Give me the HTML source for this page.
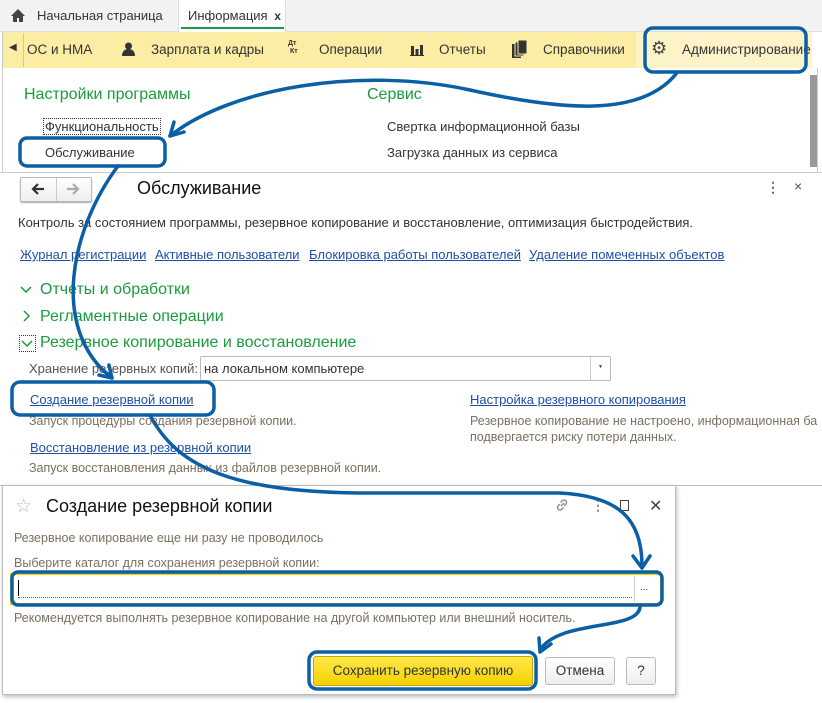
<!DOCTYPE html>
<html><head><meta charset="utf-8"><style>
*{margin:0;padding:0;box-sizing:border-box}
body{width:822px;height:703px;overflow:hidden;background:#fff;font-family:"Liberation Sans",Arial,sans-serif;font-size:13px;color:#333;position:relative}
.a{position:absolute;white-space:nowrap}
.g{color:#1a9c3e;font-size:16px}
.l{color:#1f4fa8;text-decoration:underline}
.m{color:#7b6f5f;font-size:12.5px}
</style></head><body>
<div class="a" style="left:0;top:0;width:822px;height:32px;background:#f2f2f2;border-bottom:1px solid #ddd"></div>
<svg class="a" style="left:11px;top:9px" width="14" height="13" viewBox="0 0 14 13"><path d="M7 0L0 7h2v6h4V9h2v4h4V7h2z" fill="#444"/></svg>
<div class="a" style="left:37px;top:8px;font-size:13px;color:#333">Начальная страница</div>
<div class="a" style="left:178px;top:0;width:108px;height:32px;background:#fff;border-left:1px solid #ddd;border-right:1px solid #ddd"></div>
<div class="a" style="left:188px;top:8px;font-size:13px;color:#333">Информация <b style="font-size:12px;margin-left:3px">x</b></div>
<div class="a" style="left:181px;top:27px;width:103px;height:2px;background:#1a9c3e"></div>
<div class="a" style="left:2px;top:32px;width:810px;height:36px;background:#fbeda3;border-left:1px solid #ccc"></div>
<div class="a" style="left:636px;top:32px;width:176px;height:36px;background:#fdf3c8"></div>
<div class="a" style="left:9px;top:42px;font-size:10px;color:#333">◀</div>
<div class="a" style="left:23px;top:33px;width:1px;height:34px;background:#d8c98a"></div>
<div class="a" style="left:27px;top:42px;font-size:13.5px">ОС и НМА</div>
<svg class="a" style="left:122px;top:42px" width="13" height="14" viewBox="0 0 13 14"><circle cx="6.5" cy="4" r="3.5" fill="#333"/><path d="M0 14c0-5 3-7 6.5-7s6.5 2 6.5 7z" fill="#333"/></svg>
<div class="a" style="left:151px;top:42px;font-size:13.5px">Зарплата и кадры</div>
<div class="a" style="left:288px;top:40px;font-size:7px;line-height:8px;font-weight:bold;color:#333">Дт<br>&nbsp;Кт</div>
<div class="a" style="left:319px;top:42px;font-size:13.5px">Операции</div>
<svg class="a" style="left:410px;top:43px" width="14" height="13"><rect x="1" y="3" width="3" height="9" fill="#333"/><rect x="5.5" y="6" width="3" height="6" fill="#333"/><rect x="10" y="2" width="3" height="10" fill="#333"/><rect x="0" y="12" width="14" height="1" fill="#333"/></svg>
<div class="a" style="left:439px;top:42px;font-size:13.5px">Отчеты</div>
<svg class="a" style="left:512px;top:40px" width="15" height="18"><rect x="0" y="4" width="9" height="14" fill="#333"/><rect x="3" y="2" width="9" height="14" fill="#333" stroke="#fbeda3"/><rect x="6" y="0" width="9" height="14" fill="#333" stroke="#fbeda3"/></svg>
<div class="a" style="left:543px;top:42px;font-size:13.5px">Справочники</div>
<div class="a" style="left:651px;top:38px;font-size:18px;color:#444">⚙</div>
<div class="a" style="left:682px;top:42px;font-size:13.5px">Администрирование</div>
<div class="a" style="left:2px;top:68px;width:816px;height:104px;border-left:1px solid #ccc;border-right:1px solid #ccc"></div>
<div class="a" style="left:810px;top:75px;width:7px;height:92px;background:#999"></div>
<div class="a g" style="left:24px;top:86px">Настройки программы</div>
<div class="a g" style="left:367px;top:86px">Сервис</div>
<div class="a" style="left:43px;top:118px;border:1px dotted #333;padding:0 1px">Функциональность</div>
<div class="a" style="left:45px;top:145px">Обслуживание</div>
<div class="a" style="left:387px;top:119px">Свертка информационной базы</div>
<div class="a" style="left:387px;top:145px">Загрузка данных из сервиса</div>
<div class="a" style="left:0;top:172px;width:822px;height:314px;background:#fff;border-top:1px solid #ccc;border-bottom:1px solid #bbb"></div>
<div class="a" style="left:20px;top:177px;width:72px;height:25px;border:1px solid #bbb;border-radius:2px;background:linear-gradient(#fff,#eee);box-shadow:0 1px 1px #aaa"></div>
<div class="a" style="left:56px;top:178px;width:1px;height:23px;background:#ccc"></div>
<svg class="a" style="left:31px;top:183px" width="14" height="12"><path d="M13 6H3M7 1L2 6l5 5" stroke="#333" stroke-width="2.2" fill="none"/></svg>
<svg class="a" style="left:66px;top:183px" width="14" height="12"><path d="M1 6h10M7 1l5 5-5 5" stroke="#aaa" stroke-width="2.2" fill="none"/></svg>
<div class="a" style="left:137px;top:178px;font-size:18px;color:#111">Обслуживание</div>
<div class="a" style="left:766px;top:179px;font-size:14px;color:#666;font-weight:bold">⋮</div>
<div class="a" style="left:794px;top:178px;font-size:14px;color:#555">×</div>
<div class="a" style="left:18px;top:215px">Контроль за состоянием программы, резервное копирование и восстановление, оптимизация быстродействия.</div>
<div class="a l" style="left:20px;top:247px">Журнал регистрации</div>
<div class="a l" style="left:155px;top:247px">Активные пользователи</div>
<div class="a l" style="left:309px;top:247px">Блокировка работы пользователей</div>
<div class="a l" style="left:529px;top:247px">Удаление помеченных объектов</div>
<svg class="a" style="left:20px;top:285px" width="12" height="10"><path d="M1 2l5 5 5-5" stroke="#1a9c3e" stroke-width="1.5" fill="none"/></svg>
<div class="a g" style="left:40px;top:281px">Отчеты и обработки</div>
<svg class="a" style="left:22px;top:310px" width="10" height="12"><path d="M2 1l5 5-5 5" stroke="#1a9c3e" stroke-width="1.5" fill="none"/></svg>
<div class="a g" style="left:40px;top:308px">Регламентные операции</div>
<div class="a" style="left:19px;top:335px;width:17px;height:17px;border:1px dotted #333"></div>
<svg class="a" style="left:21px;top:339px" width="12" height="10"><path d="M1 2l5 5 5-5" stroke="#1a9c3e" stroke-width="1.5" fill="none"/></svg>
<div class="a g" style="left:40px;top:334px">Резервное копирование и восстановление</div>
<div class="a" style="left:29px;top:361px;color:#555">Хранение резервных копий:</div>
<div class="a" style="left:200px;top:356px;width:411px;height:25px;border:1px solid #bbb;border-radius:2px"></div>
<div class="a" style="left:590px;top:357px;width:1px;height:23px;background:#ccc"></div>
<div class="a" style="left:598px;top:364px;font-size:5px;color:#444">▼</div>
<div class="a" style="left:204px;top:361px">на локальном компьютере</div>
<div class="a l" style="left:30px;top:392px">Создание резервной копии</div>
<div class="a m" style="left:29px;top:414px">Запуск процедуры создания резервной копии.</div>
<div class="a l" style="left:30px;top:440px">Восстановление из резервной копии</div>
<div class="a m" style="left:29px;top:461px">Запуск восстановления данных из файлов резервной копии.</div>
<div class="a l" style="left:470px;top:392px">Настройка резервного копирования</div>
<div class="a m" style="left:470px;top:414px">Резервное копирование не настроено, информационная ба</div>
<div class="a m" style="left:470px;top:430px">подвергается риску потери данных.</div>
<div class="a" style="left:2px;top:485px;width:674px;height:210px;background:#fff;border:1px solid #bbb;box-shadow:1px 2px 4px rgba(0,0,0,.25)"></div>
<div class="a" style="left:15px;top:495px;font-size:19px;color:#bbb">☆</div>
<div class="a" style="left:46px;top:496px;font-size:18px;color:#111">Создание резервной копии</div>
<svg class="a" style="left:554px;top:497px" width="16" height="16"><path d="M7 9l3-3M6 7L4 9a2.5 2.5 0 0 0 3.5 3.5L9.5 10.5M10 9l2-2A2.5 2.5 0 0 0 8.5 3.5L6.5 5.5" stroke="#888" stroke-width="1.3" fill="none"/></svg>
<div class="a" style="left:591px;top:497px;font-size:14px;color:#888;font-weight:bold">⋮</div>
<div class="a" style="left:620px;top:500px;width:9px;height:11px;border:1.5px solid #444"></div>
<div class="a" style="left:649px;top:496px;font-size:16px;color:#444">✕</div>
<div class="a m" style="left:14px;top:531px">Резервное копирование еще ни разу не проводилось</div>
<div class="a m" style="left:14px;top:556px">Выберите каталог для сохранения резервной копии:</div>
<div class="a" style="left:10px;top:573px;width:652px;height:32px;border:2px solid #f2cd00;background:#fff"></div>
<div class="a" style="left:634px;top:576px;width:1px;height:26px;background:#ccc"></div>
<div class="a" style="left:640px;top:582px;font-size:10px">...</div>
<div class="a" style="left:18px;top:580px;width:1px;height:16px;background:#000"></div>
<div class="a" style="left:18px;top:597px;width:614px;border-top:1px dotted #d33"></div>
<div class="a m" style="left:14px;top:611px">Рекомендуется выполнять резервное копирование на другой компьютер или внешний носитель.</div>
<div class="a" style="left:313px;top:656px;width:220px;height:30px;border-radius:3px;background:linear-gradient(#ffe94a,#f5d000);border:1px solid #c9a800;text-align:center;line-height:28px;font-size:13.5px;color:#333">Сохранить резервную копию</div>
<div class="a" style="left:545px;top:657px;width:70px;height:28px;border:1px solid #bbb;border-radius:3px;background:linear-gradient(#fff,#eee);text-align:center;line-height:26px;font-size:13.5px">Отмена</div>
<div class="a" style="left:626px;top:657px;width:30px;height:28px;border:1px solid #bbb;border-radius:3px;background:linear-gradient(#fff,#eee);text-align:center;line-height:26px;font-size:13.5px">?</div>
<svg class="a" style="left:0;top:0" width="822" height="703" viewBox="0 0 822 703">
<g fill="none" stroke="#0b5fa5" stroke-width="3.5" stroke-linecap="round" stroke-linejoin="round">
<rect x="645" y="28" width="161" height="44" rx="8"/>
<rect x="20" y="138" width="145" height="28" rx="7"/>
<rect x="12" y="382" width="202" height="33" rx="8"/>
<rect x="12" y="572" width="650" height="33" rx="6"/>
<rect x="309" y="652" width="227" height="37" rx="8"/>
<path d="M676 74C640 118 560 110 470 90C360 66 230 88 170 136"/>
<path d="M170 136l4-14M170 136l14-4"/>
<path d="M118 166C70 230 50 330 112 378"/>
<path d="M112 378l-13-3M112 378l-3-13"/>
<path d="M150 415C178 470 240 492 360 493L560 493C620 496 642 520 642 566"/>
<path d="M642 568l-9-12M642 568l8-12"/>
<path d="M640 605C642 632 560 618 540 650"/>
<path d="M540 652l-1-14M540 652l11-8"/>
</g></svg>
</body></html>
